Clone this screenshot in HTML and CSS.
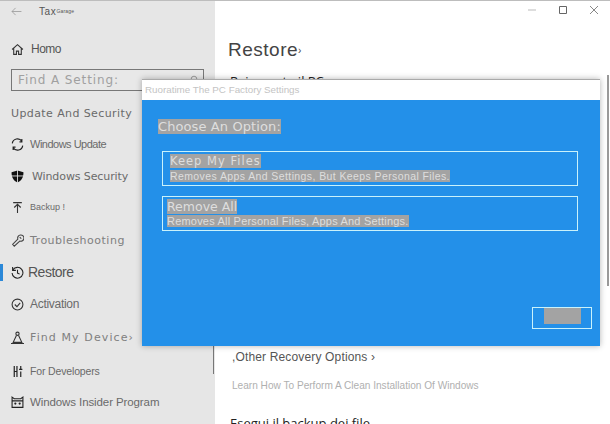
FILE: index.html
```html
<!DOCTYPE html>
<html lang="en">
<head>
<meta charset="utf-8">
<title>Settings</title>
<link rel="stylesheet" href="styles.css">
</head>
<body>
<div class="window">
  <aside class="sidebar">
    <div class="appbar">
      <svg class="back" viewBox="0 0 12 10"><path d="M11.500 5H1M5 1L1 5l4 4" fill="none" stroke="#999" stroke-width=".9"/></svg>
      <span class="apptitle">Tax<small>Garage</small></span>
    </div>
    <div class="row home">
      <svg class="ico" viewBox="0 0 12 12"><path d="M1 6l5-4.500L11 6M2.500 5v5.500h2.500V7.500h2v3h2.500V5" fill="none" stroke="#333" stroke-width="1"/></svg>
      <span class="t-home">Homo</span>
    </div>
    <div class="search">
      <span class="search-text">Find A Setting:</span>
      <svg class="lens" viewBox="0 0 8 8"><circle cx="4" cy="4" r="2.800" fill="none" stroke="#888" stroke-width=".8"/></svg>
    </div>
    <div class="group">Update And Security</div>
    <nav class="nav">
      <div class="row">
        <svg class="ico" viewBox="0 0 12 12"><path d="M1.200 5A4.800 4.800 0 0 1 10 3M10 1v2.500H7.800M10.800 7A4.800 4.800 0 0 1 2 9M2 11V8.500h2.200" fill="none" stroke="#222" stroke-width="1.100"/></svg>
        <span class="t-update">Windows Update</span>
      </div>
      <div class="row">
        <svg class="ico shield" viewBox="0 0 12 12"><path d="M6 .5L11.500 2c0 5-2 8-5.500 9.500C2.500 10 .5 7 .5 2z" fill="#111"/><path d="M0 5.500h12M6 0v12" stroke="#e6e6e6" stroke-width=".8"/></svg>
        <span class="t-security">Windows Security</span>
      </div>
      <div class="row r-up">
        <svg class="ico" viewBox="0 0 12 12"><path d="M2 1.500h8M6 11V3M3 6l3-3 3 3" fill="none" stroke="#333" stroke-width="1"/></svg>
        <span class="t-backup">Backup !</span>
      </div>
      <div class="row r-down">
        <svg class="ico" viewBox="0 0 12 12"><path d="M1.500 9.500l4.800-4.800a2.900 2.900 0 1 1 1.800 1.800L3 11.200zM8 2.800l1.500 1.500" fill="none" stroke="#444" stroke-width="1"/></svg>
        <span class="t-wide">Troubleshooting</span>
      </div>
      <div class="row current">
        <svg class="ico" viewBox="0 0 12 12"><path d="M1.800 3.500A5 5 0 1 1 1 6.500M1.500 1v3h3M6 3.500V6.500l2 1" fill="none" stroke="#222" stroke-width="1"/></svg>
        <span class="t-restore">Restore</span>
      </div>
      <div class="row">
        <svg class="ico" viewBox="0 0 12 12"><circle cx="6" cy="6" r="5" fill="none" stroke="#333"/><path d="M3.500 6l2 2 3-3.500" fill="none" stroke="#333"/></svg>
        <span class="t-activation">Activation</span>
      </div>
      <div class="row r-down">
        <svg class="ico" viewBox="0 0 12 12"><circle cx="6" cy="2.500" r="1.500" fill="none" stroke="#333"/><path d="M5 4.200L2 10.500h8L7 4.200M0 11.500h12" fill="none" stroke="#333"/></svg>
        <span class="t-wide t-device">Find My Device›</span>
      </div>
      <div class="row r-down2">
        <svg class="ico" viewBox="0 0 12 12"><path d="M3 1v10M5.500 1v10M3 6h2.500M9 1v3M7.500 4h3M9 6v5" fill="none" stroke="#222" stroke-width="1.100"/></svg>
        <span class="t-dev">For Developers</span>
      </div>
      <div class="row r-up">
        <svg class="ico" viewBox="0 0 12 12"><path d="M1 1l2 1.500h6L11 1v9.500H1zM1 4.500h10" fill="none" stroke="#222"/><circle cx="4" cy="7" r="1" fill="#222"/><circle cx="8" cy="7" r="1" fill="#222"/></svg>
        <span class="t-insider">Windows Insider Program</span>
      </div>
    </nav>
  </aside>
  <main class="main">
    <div class="controls">
      <svg class="ctl" viewBox="0 0 8 8"><path d="M0 4h8" stroke="#bbb"/></svg>
      <svg class="ctl" viewBox="0 0 8 8"><path d="M.5.500h7v7h-7z" fill="none" stroke="#666"/></svg>
      <svg class="ctl" viewBox="0 0 8 8"><path d="M0 0l8 8M8 0L0 8" stroke="#888" fill="none"/></svg>
    </div>
    <h1 class="h1">Restore<span class="tick">›</span></h1>
    <h2 class="h2 reset">Reimposta il PC</h2>
    <div class="other">,Other Recovery Options ›</div>
    <div class="learn">Learn How To Perform A Clean Installation Of Windows</div>
    <h2 class="h2 backup">Esegui il backup dei file</h2>
  </main>
  <div class="scroll-left"></div>
  <div class="scroll-right"></div>
  <section class="dialog">
    <div class="dialog-title">Ruoratime The PC Factory Settings</div>
    <div class="dialog-body">
      <div class="choose"><mark>Choose An Option:</mark></div>
      <div class="choice">
        <div class="choice-name n1"><mark>Keep My Files</mark></div>
        <div class="choice-desc d1"><mark>Removes Apps And Settings, But Keeps Personal Files.</mark></div>
      </div>
      <div class="choice c2">
        <div class="choice-name n2"><mark>Remove All</mark></div>
        <div class="choice-desc d2"><mark>Removes All Personal Files, Apps And Settings.</mark></div>
      </div>
      <div class="actions"><div class="cancel"><span class="cancel-fill"></span></div></div>
    </div>
  </section>
</div>
</body>
</html>
```
FILE: styles.css
```css
* { box-sizing: border-box; }
html, body { margin: 0; height: 100%; }
body { font-family: "Liberation Sans", Arial, sans-serif; background: #fff; overflow: hidden; }
.window { position: relative; width: 610px; height: 424px; display: flex; border-top: 1px solid #bdbdbd; overflow: hidden; }
.sidebar { width: 215px; flex: none; background: #e6e6e6; display: flex; flex-direction: column; padding-top: 2px; }
.appbar { height: 16px; display: flex; align-items: center; padding-left: 11px; gap: 17px; }
.back { width: 11px; height: 9px; }
.apptitle { font-size: 10px; color: #555; letter-spacing: .6px; }
.apptitle small { font-size: 5px; vertical-align: 2px; letter-spacing: .2px; }
.row { height: 32px; display: flex; align-items: center; padding-left: 11px; gap: 6px; color: #6a6a6a; font-size: 12px; position: relative; }
.r-up { margin-top: -1px; }
.r-down { margin-top: 1px; }
.r-down2 { margin-top: 2px; }
.ico { width: 13px; height: 13px; flex: none; }
.home { margin-top: 14px; height: 32px; color: #555; }
.t-home { font-size: 12px; letter-spacing: -.5px; margin-left: 1px; }
.search { margin: 4px 11px 0 11px; height: 22px; border: 1px solid #777; display: flex; align-items: center; justify-content: space-between; padding: 0 5px 0 6px; background: #e8e8e8; }
.search-text { font-size: 12px; color: #a0a0a0; font-family: "DejaVu Sans", sans-serif; letter-spacing: .9px; }
.lens { width: 8px; height: 8px; margin-top: -3px; }
.group { margin-top: 12px; padding-left: 11px; height: 22px; line-height: 22px; font-size: 11px; font-family: "DejaVu Sans", sans-serif; color: #6a6a6a; letter-spacing: .4px; }
.nav { margin-top: 3px; display: flex; flex-direction: column; }
.t-update { font-size: 11px; letter-spacing: -.5px; }
.t-security { font-size: 11px; font-family: "DejaVu Sans", sans-serif; margin-left: 2px; letter-spacing: -.1px; }
.t-backup { font-size: 9px; }
.t-wide { font-size: 11px; font-family: "DejaVu Sans", sans-serif; letter-spacing: .5px; color: #808080; }
.t-device { letter-spacing: 1.100px; }
.t-restore { font-size: 14px; color: #555; letter-spacing: -.5px; margin-left: -2px; }
.t-activation { font-size: 12px; letter-spacing: -.3px; }
.t-dev { font-size: 10.500px; letter-spacing: -.15px; }
.t-insider { font-size: 11.500px; letter-spacing: -.1px; }
.current::before { content: ""; position: absolute; left: 0; top: 8px; width: 3px; height: 17px; background: #2b88d8; }
.main { flex: 1; padding-left: 13px; position: relative; display: flex; flex-direction: column; }
.controls { position: absolute; right: 0; top: 5px; display: flex; gap: 23px; padding-right: 12px; }
.ctl { width: 8px; height: 8px; }
.h1 { margin: 38px 0 0; font-size: 19px; font-weight: 400; color: #444; line-height: 22px; letter-spacing: .5px; }
.tick { font-size: 10px; vertical-align: 2px; }
.h2 { margin: 0; font-size: 13px; font-weight: 400; color: #222; font-family: "Open Sans", sans-serif; }
.reset { margin-top: 10px; margin-left: 2px; }
.other { margin-top: 260px; margin-left: 4px; font-size: 12px; color: #555; letter-spacing: .15px; }
.learn { margin-top: 16px; margin-left: 4px; font-size: 10.100px; color: #b0b0b0; }
.backup { margin-top: 23px; margin-left: 2px; }
.scroll-left { position: absolute; left: 213px; top: 344px; width: 1px; height: 29px; background: #777; }
.scroll-right { position: absolute; left: 607px; top: 74px; width: 2px; height: 211px; background: #999; }
.dialog { position: absolute; left: 142px; top: 78px; width: 458px; height: 267px; box-shadow: 0 0 6px rgba(0,0,0,.3); border-top: 1px solid #aaa; display: flex; flex-direction: column; }
.dialog-title { height: 20px; background: #fff; font-size: 9.800px; color: #c4c4c4; line-height: 20px; padding-left: 3px; }
.dialog-body { flex: 1; background: #2390e9; display: flex; flex-direction: column; padding: 19px 22px 0 20px; }
mark { background: #a3a3a3; color: #dedede; }
.choose { font-size: 13px; font-family: "DejaVu Sans", sans-serif; margin-left: -4px; line-height: 16px; letter-spacing: .1px; }
.choice { margin-top: 16px; height: 35px; border: 1.500px solid #c9f2fb; padding: 2px 0 0 7px; }
.c2 { margin-top: 10px; }
.choice-name { font-size: 11.500px; line-height: 15px; font-family: "DejaVu Sans", sans-serif; letter-spacing: 1px; }
.choice-desc { font-size: 10.500px; line-height: 14px; letter-spacing: .4px; }
.n2 { margin-left: -3px; font-size: 12.500px; letter-spacing: 0; }
.d2 { margin-left: -3px; font-size: 11px; letter-spacing: .2px; }
.actions { margin-top: auto; margin-bottom: 17px; display: flex; justify-content: flex-end; margin-right: -14px; }
.cancel { width: 60px; height: 22px; border: 1.500px solid #c9f2fb; display: flex; justify-content: center; }
.cancel-fill { width: 37px; height: 16px; background: #a3a3a3; }
```
